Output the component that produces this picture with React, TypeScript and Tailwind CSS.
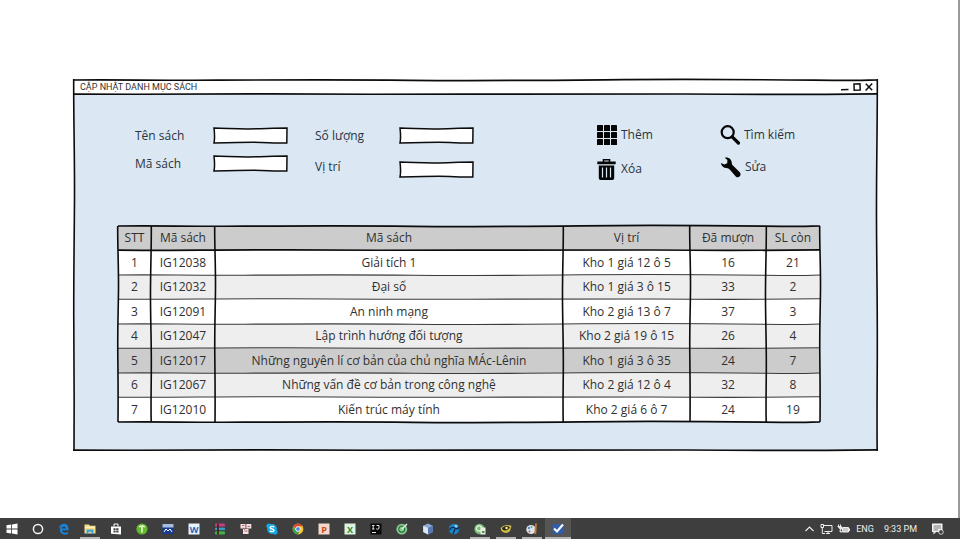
import type { ReactNode } from "react";

type Book = { code: string; title: string; place: string; lent: number; left: number };

const books: Book[] = [
  { code: "IG12038", title: "Giải tích 1", place: "Kho 1 giá 12 ô 5", lent: 16, left: 21 },
  { code: "IG12032", title: "Đại số", place: "Kho 1 giá 3 ô 15", lent: 33, left: 2 },
  { code: "IG12091", title: "An ninh mạng", place: "Kho 2 giá 13 ô 7", lent: 37, left: 3 },
  { code: "IG12047", title: "Lập trình hướng đối tượng", place: "Kho 2 giá 19 ô 15", lent: 26, left: 4 },
  { code: "IG12017", title: "Những nguyên lí cơ bản của chủ nghĩa MÁc-Lênin", place: "Kho 1 giá 3 ô 35", lent: 24, left: 7 },
  { code: "IG12067", title: "Những vấn đề cơ bản trong công nghệ", place: "Kho 2 giá 12 ô 4", lent: 32, left: 8 },
  { code: "IG12010", title: "Kiến trúc máy tính", place: "Kho 2 giá 6 ô 7", lent: 24, left: 19 },
];

const SELECTED = 4;

// Hand-drawn strokes, stretched along the edge that they decorate.
const H_WAVES = [
  "M0 2 C6 1.4 10 2.6 18 2.2 S34 1.6 42 2.3 S58 2.4 66 1.8 S84 1.5 92 2.2 S98 2 100 2",
  "M0 2.2 C8 2.6 14 1.6 24 1.8 S40 2.6 50 2.2 S68 1.5 76 2 S92 2.5 100 1.8",
];
const V_WAVES = [
  "M1.7 0 C1.500 10 2.700 20 2.500 32 S1.500 52 1.800 66 S2.300 88 2 100",
  "M2.300 0 C2.500 12 1.300 24 1.500 38 S2.500 60 2.300 74 S1.800 92 2.200 100",
];

function HStroke({ wave = 0, thin = false }: { wave?: number; thin?: boolean }) {
  return (
    <svg className="block h-1 w-full" viewBox="0 0 100 4" preserveAspectRatio="none" aria-hidden="true">
      <path d={H_WAVES[wave % 2]} fill="none" stroke={thin ? "#3a3a3a" : "#0c0c0c"} strokeWidth={thin ? 1.1 : 1.7} vectorEffect="non-scaling-stroke" />
    </svg>
  );
}

function VStroke({ wave = 0 }: { wave?: number }) {
  return (
    <svg className="block h-full w-1" viewBox="0 0 4 100" preserveAspectRatio="none" aria-hidden="true">
      <path d={V_WAVES[wave % 2]} fill="none" stroke="#0c0c0c" strokeWidth="1.6" vectorEffect="non-scaling-stroke" />
    </svg>
  );
}

function SketchFrame() {
  return (
    <div className="pointer-events-none absolute -inset-0.5">
      <div className="absolute inset-x-px top-0"><HStroke /></div>
      <div className="absolute inset-x-px bottom-0"><HStroke wave={1} /></div>
      <div className="absolute inset-y-px left-0"><VStroke /></div>
      <div className="absolute inset-y-px right-0"><VStroke wave={1} /></div>
    </div>
  );
}

function SketchInput({ id }: { id: string }) {
  return (
    <div className="relative h-[17px] w-[75px]">
      <svg className="absolute inset-0 h-full w-full" viewBox="0 0 75 17" preserveAspectRatio="none" aria-hidden="true">
        <path d="M1 1 C14 1.2 22 2 36 1.900 S60 1 74 1 L73.800 16 C60 16 52 15.300 40 15.300 S16 15.600 1 16 C1.800 12 1.600 6 1 1Z" fill="#fff" stroke="#0c0c0c" strokeWidth="1.5" />
      </svg>
      <input id={id} type="text" className="relative block h-full w-full bg-transparent px-1 text-xs outline-none" />
    </div>
  );
}

function Action({ label, children }: { label: string; children: ReactNode }) {
  return (
    <button type="button" className="flex h-5 items-center gap-1 whitespace-nowrap">
      {children}
      {label}
    </button>
  );
}

function GridIcon() {
  return (
    <svg className="size-5" viewBox="0 0 20 20" fill="#050505" aria-hidden="true">
      {[0, 7, 14].map((y) => [0, 7, 14].map((x) => <rect key={`${x}-${y}`} x={x} y={y} width="6" height="6" rx="0.6" />))}
    </svg>
  );
}

function TrashIcon() {
  return (
    <svg className="h-[21px] w-5" viewBox="0 0 20 21" aria-hidden="true">
      <path d="M6.500 3V0.800h6V3" fill="none" stroke="#050505" strokeWidth="1.600" />
      <path d="M0.300 2.600h18.400v2.700H0.300zM1.800 6.500h15.400v12.700q0 1.800-1.800 1.800H3.600q-1.800 0-1.800-1.800z" fill="#050505" />
      <path d="M5.500 8.500v10M9.500 8.500v10M13.500 8.500v10" stroke="#dbe8f3" strokeWidth="1.200" />
    </svg>
  );
}

function SearchIcon() {
  return (
    <svg className="size-5" viewBox="0 0 20 20" fill="none" stroke="#050505" strokeLinecap="round" aria-hidden="true">
      <circle cx="7.700" cy="7.200" r="6" strokeWidth="2.200" />
      <path d="M12.200 11.800L18.400 18" strokeWidth="3.200" />
    </svg>
  );
}

function WrenchIcon() {
  return (
    <svg className="h-[21px] w-[21px]" viewBox="0 0 20 21" aria-hidden="true">
      <path d="M4.200 0.700C7.600-0.300 11.200 2 11.300 5.900C11.300 7.400 12 8.200 13.200 9.300L19.300 15.200C21.500 18 18.500 21.800 15.500 19.700L9.400 12.800C8.300 11.700 7.500 11.200 6 11.100C3 10.900 0.700 8.700 0.400 5.900L3.900 7.600L6.700 6.200L6.900 3.100Z" fill="#050505" />
    </svg>
  );
}

// Column and row edges of the table, drawn as shares of its size.
const COL_EDGES = [0, 33, 97, 445, 572, 648, 702];
const ROW_EDGES = [0, 24, 49, 73, 98, 122, 147, 171, 196];

function BookTable() {
  return (
    <div className="relative mt-[47px] mr-[57px] ml-11">
      <table className="w-full table-fixed border-collapse text-center text-xs leading-4 text-[#303030]">
        <colgroup>
          <col className="w-[4.7%]" />
          <col className="w-[9.1%]" />
          <col className="w-[49.6%]" />
          <col className="w-[18.1%]" />
          <col className="w-[10.8%]" />
          <col className="w-[7.7%]" />
        </colgroup>
        <thead>
          <tr className="h-6 bg-[#cccccc]">
            {["STT", "Mã sách", "Mã sách", "Vị trí", "Đã mượn", "SL còn"].map((name, i) => (
              <th key={i} scope="col" className="p-0 font-normal">{name}</th>
            ))}
          </tr>
        </thead>
        <tbody>
          {books.map((book, i) => (
            <tr
              key={book.code}
              className={`${i % 2 === 0 ? "h-[25px]" : "h-6"} ${i === SELECTED ? "bg-[#cccccc]" : i % 2 === 1 ? "bg-[#eeeeee]" : "bg-white"}`}
            >
              <td className="p-0">{i + 1}</td>
              <td className="p-0">{book.code}</td>
              <td className="p-0">{book.title}</td>
              <td className="p-0">{book.place}</td>
              <td className="p-0">{book.lent}</td>
              <td className="p-0">{book.left}</td>
            </tr>
          ))}
        </tbody>
      </table>
      <div className="pointer-events-none absolute inset-0">
        {ROW_EDGES.map((edge, i) => (
          <div key={edge} className="absolute inset-x-0 -mt-0.5" style={{ top: `${(edge / 196) * 100}%` }}>
            <HStroke wave={i} thin={i > 1 && i < 8} />
          </div>
        ))}
        {COL_EDGES.map((edge, i) => (
          <div key={edge} className="absolute inset-y-0 -ml-0.5" style={{ left: `${(edge / 702) * 100}%` }}>
            <VStroke wave={i} />
          </div>
        ))}
      </div>
    </div>
  );
}

function Glyph({ children }: { children: ReactNode }) {
  return <svg className="size-3" viewBox="0 0 12 12" aria-hidden="true">{children}</svg>;
}

function Tile({ color, letter, ink = "#fff" }: { color: string; letter: string; ink?: string }) {
  return (
    <Glyph>
      <rect x="0.500" y="0.500" width="11" height="11" fill={color} />
      <text x="6" y="9.500" textAnchor="middle" fontSize="9" fontWeight="700" fill={ink} fontFamily="Open Sans, sans-serif">{letter}</text>
    </Glyph>
  );
}

const apps: { name: string; open?: boolean; active?: boolean; icon: ReactNode }[] = [
  { name: "Start", icon: <Glyph><path d="M0.500 2.200L5.200 1.500V5.600H0.500zM6 1.400L11.500 0.500V5.600H6zM0.500 6.400H5.200V10.500L0.500 9.800zM6 6.400H11.500V11.500L6 10.600z" fill="#fff" /></Glyph> },
  { name: "Cortana", icon: <Glyph><circle cx="6" cy="6" r="4.600" fill="none" stroke="#f4f4f4" strokeWidth="1.500" /></Glyph> },
  { name: "Edge", icon: <Glyph><path d="M10.500 7.300H4C4.200 10 7.500 10.300 10 8.900V11C5.500 12.800 1.800 10.600 1.900 7.200C2 5.300 3 4.200 4.400 3.700C2.500 3.900 1.300 4.800 0.600 6.300C1 2.800 3.200 0.700 6 0.700C9.300 0.700 11 3.200 10.500 7.300zM4.100 5.500H7.800C7.700 2.700 4.200 2.900 4.100 5.500z" fill="#1583dc" /></Glyph> },
  { name: "File Explorer", open: true, icon: <Glyph><path d="M0.500 1.500H5L6 2.700H11.500V10.500H0.500z" fill="#f7dc83" /><path d="M1.500 3.800H10.500V5H1.500z" fill="#fff4c4" /><path d="M2.500 6.500H9.500V11H7.500V8.800H4.500V11H2.500z" fill="#37a4dd" /></Glyph> },
  { name: "Store", icon: <Glyph><path d="M1 3.500H11V11.500L1 10.800z" fill="#fff" /><path d="M4 3.500V1H8V3.500" fill="none" stroke="#fff" /><path d="M3.500 5.200H5.600V7H3.500zM6.200 5.200H8.500V7H6.200zM3.500 7.600H5.600V9.400H3.500zM6.200 7.600H8.500V9.400H6.200z" fill="#444" /></Glyph> },
  { name: "Torrent", icon: <Glyph><circle cx="6" cy="6" r="5.600" fill="#62b92d" /><path d="M3 4Q6 2 9 4M6 4V9.500" fill="none" stroke="#efffdc" strokeWidth="1.500" /></Glyph> },
  { name: "Commander", icon: <Glyph><rect x="0.500" y="1" width="11" height="10" fill="#173a92" /><path d="M0.500 1H11.500V4.500H0.500z" fill="#a8bce0" /><path d="M2 9L4 6L6 8L8 6L10 9" fill="none" stroke="#fff" /></Glyph> },
  { name: "Word", icon: <Tile color="#e9f2fc" letter="W" ink="#2266b8" /> },
  { name: "WinRAR", icon: <Glyph><rect x="1" y="0.500" width="10" height="3.400" rx="1" fill="#c23f85" /><rect x="1" y="4.200" width="10" height="3.400" rx="1" fill="#35a0c8" /><rect x="1" y="8" width="10" height="3.400" rx="1" fill="#45ad4e" /><path d="M4 0.500V11.500" stroke="#4a2618" strokeWidth="1.800" /><path d="M0.500 4H11M0.500 7.800H11" stroke="#3b2020" strokeWidth="0.700" /></Glyph> },
  { name: "Database", icon: <Glyph><rect x="0.500" y="1" width="5" height="4.500" fill="#f5dfe0" /><rect x="6.300" y="1" width="5" height="4.500" fill="#f5dfe0" /><rect x="3" y="6" width="5.500" height="5" fill="#f5dfe0" /><path d="M2 2.500H4.500M7.500 3.500H10M4.500 8H7.500M3 4.500L5 7" stroke="#a94950" strokeWidth="0.800" /></Glyph> },
  { name: "Skype", icon: <Glyph><circle cx="6" cy="6" r="4.900" fill="#13a9e6" /><circle cx="3" cy="3" r="2.600" fill="#13a9e6" /><circle cx="9" cy="9" r="2.600" fill="#13a9e6" /><path d="M8.200 4.200C7 2.800 4 3.200 4.100 4.700C4.300 6.500 8 5.400 8 7.400C7.900 9 4.900 9 3.900 7.700" fill="none" stroke="#fff" strokeWidth="1.400" /></Glyph> },
  { name: "Chrome", icon: <Glyph><circle cx="6" cy="6" r="5.400" fill="#f2c52d" /><path d="M1.300 3.300A5.400 5.400 0 0 1 10.700 3.300H6A2.700 2.700 0 0 0 3.500 5.500z" fill="#dc4437" /><path d="M1.300 3.300A5.400 5.400 0 0 0 5.600 11.400L8 8A2.700 2.700 0 0 1 3.600 7.300z" fill="#38a156" /><circle cx="6" cy="6" r="2.300" fill="#4387ee" stroke="#fff" strokeWidth="0.800" /></Glyph> },
  { name: "PowerPoint", icon: <Tile color="#f5d8ca" letter="P" ink="#cf4a21" /> },
  { name: "Excel", icon: <Tile color="#dff2dc" letter="X" ink="#25873a" /> },
  { name: "IntelliJ IDEA", icon: <Glyph><rect x="0.500" y="0.500" width="11" height="11" fill="#080808" /><path d="M2 2.500H4.500M3.200 2.500V6M2 6H4.500M6.500 2.500H9V5.500Q8 6.800 6.200 5.800M2 9.500H6" fill="none" stroke="#e2e2e2" /></Glyph> },
  { name: "Camtasia", icon: <Glyph><circle cx="5.800" cy="6.200" r="5.400" fill="#8bcf91" /><circle cx="5.800" cy="6.200" r="3" fill="none" stroke="#2f7c42" strokeWidth="1.300" /><path d="M6 6L11 1" stroke="#e5f4e2" strokeWidth="1.500" /></Glyph> },
  { name: "VirtualBox", icon: <Glyph><path d="M6 0.500L10.800 2.800V9L6 11.600L1.200 9V2.800z" fill="#8eabd8" /><path d="M1.200 2.800L6 5V11.600L1.200 9z" fill="#dce7f5" /><path d="M6 5L10.800 2.800V9L6 11.600z" fill="#5877ae" /></Glyph> },
  { name: "Network", icon: <Glyph><circle cx="6" cy="6" r="5.300" fill="#1f82c4" /><path d="M1 7Q4 3 7 5T11 4M5 11L7 6" fill="none" stroke="#102b52" strokeWidth="1.300" /><circle cx="8" cy="3" r="1.600" fill="#7fd0f1" /></Glyph> },
  { name: "Recorder", open: true, icon: <Glyph><circle cx="5.500" cy="6" r="5.200" fill="#74be73" /><circle cx="5" cy="5.500" r="2.600" fill="none" stroke="#edf8e8" strokeWidth="1.200" /><path d="M6.500 4.500H11.500V11.500H6.500z" fill="#e9eee4" /><path d="M8 8H10.500V10H8z" fill="#558b55" /></Glyph> },
  { name: "Viewer", open: true, icon: <Glyph><path d="M0.500 5Q5 0 11.500 3L10 8Q6 12 1.500 8z" fill="#d0bd48" /><path d="M2 5Q6 1.500 10 4.500Q7 8.500 3 7" fill="#252515" /><circle cx="6.500" cy="5" r="1.300" fill="#eee69a" /></Glyph> },
  { name: "Paint", open: true, icon: <Glyph><ellipse cx="5" cy="6.500" rx="4.700" ry="4.500" fill="#d9e5ed" /><circle cx="3" cy="5" r="1.200" fill="#4e8fd1" /><circle cx="5.500" cy="4" r="1" fill="#62b05b" /><circle cx="3.500" cy="8.500" r="1" fill="#bd5b5c" /><path d="M10 0.500L9.300 11" stroke="#c97932" strokeWidth="1.900" /></Glyph> },
  { name: "Mockup editor", open: true, active: true, icon: <Glyph><rect x="0.500" y="1" width="10.500" height="10" rx="1" fill="#315da8" /><path d="M2 5.500L5 8.500L11 1.500" fill="none" stroke="#f5f7ff" strokeWidth="2.200" /></Glyph> },
];

function Taskbar() {
  return (
    <footer className="flex h-[21px] items-stretch bg-[#3e3e3e] font-[Roboto,sans-serif] text-[9px] leading-3 text-[#eeeeee]">
      <nav aria-label="Taskbar" className="-ml-px flex">
        {apps.map((app) => (
          <button
            key={app.name}
            type="button"
            aria-label={app.name}
            className={`relative flex w-[26px] items-center justify-center ${app.active ? "bg-[#555555]" : ""}`}
          >
            {app.icon}
            {app.open && <span className={`absolute bottom-0 h-0.5 bg-[#b5b5b5] ${app.active ? "inset-x-0" : "inset-x-[3px]"}`} />}
          </button>
        ))}
      </nav>
      <div className="ml-auto flex items-center pr-4">
        <svg className="mr-1.5 h-2 w-[9px]" viewBox="0 0 9 8" fill="none" stroke="#eee" aria-hidden="true"><path d="M0.500 6L4.500 2L8.500 6" strokeWidth="1.100" /></svg>
        <svg className="mr-1 h-3 w-[13px]" viewBox="0 0 13 12" fill="none" stroke="#eee" aria-hidden="true"><path d="M3.500 2.500H12V8.500H4.500M6 10.500H10M8 8.500V10.500M1 1.500H3.500V4.500H1zM2.300 4.500V10.500H5" /></svg>
        <svg className="mr-1.5 h-3 w-[13px]" viewBox="0 0 13 12" aria-hidden="true"><path d="M5.500 4.500H11.500V9H5.500z" fill="#ccc" stroke="#eee" /><path d="M12.500 5.500V8M1.500 1.500V4M3.500 1.500V4" stroke="#eee" /><path d="M0.500 3.500H4.500V6L3 7.500V9H5" fill="#eee" stroke="#eee" strokeWidth="0.800" /></svg>
        <span className="mr-2.5">ENG</span>
        <time className="mr-3.5">9:33 PM</time>
        <svg className="h-3 w-[13px]" viewBox="0 0 13 12" aria-hidden="true"><path d="M1 0.500H11.500V9H5L2.500 11.500V9H1z" fill="#f3f3f3" /><path d="M2.500 3H10M2.500 5H10M2.500 7H7" stroke="#555" strokeWidth="0.800" /><circle cx="10" cy="9" r="2.300" fill="#3e3e3e" stroke="#eee" strokeWidth="0.800" /></svg>
      </div>
    </footer>
  );
}

export default function App() {
  return (
    <div className="flex min-h-screen flex-col bg-white font-['Open_Sans','Noto_Sans',sans-serif] text-xs leading-4 text-[#2a3340]">
      <main className="flex-1 border-r-2 border-[#999999] pt-20 pr-[81px] pb-16 pl-[74px]">
        <section aria-label="Cập nhật danh mục sách" className="relative bg-[#dbe8f3] pb-7">
          <header className="relative flex h-[14px] items-center justify-between bg-white pr-1 pl-1.5">
            <h1 className="font-[Roboto,sans-serif] text-[9px] leading-3 text-[#333333]">CẬP NHẬT DANH MỤC SÁCH</h1>
            <div className="flex gap-1">
              <button type="button" aria-label="Minimize">
                <svg className="size-2" viewBox="0 0 8 8"><path d="M0 6.800L7.500 6.500" stroke="#111" strokeWidth="1.500" /></svg>
              </button>
              <button type="button" aria-label="Maximize">
                <svg className="size-2" viewBox="0 0 8 8"><path d="M1 1L7 0.800L7.200 7L1.200 7.200z" fill="none" stroke="#111" strokeWidth="1.500" /></svg>
              </button>
              <button type="button" aria-label="Close">
                <svg className="size-2" viewBox="0 0 8 8"><path d="M0.800 0.800L7.200 7.200M7.200 0.600L0.600 7.400" stroke="#111" strokeWidth="1.500" /></svg>
              </button>
            </div>
            <div className="pointer-events-none absolute inset-x-0 -bottom-0.5"><HStroke wave={1} /></div>
          </header>
          <form className="flex h-[85px] items-start pt-[33px] pl-[61px]" onSubmit={(event) => event.preventDefault()}>
            <div className="flex w-[78px] flex-col gap-2.5 leading-[18px]">
              <label htmlFor="book-name">Tên sách</label>
              <label htmlFor="book-code">Mã sách</label>
            </div>
            <div className="flex w-[102px] flex-col gap-[11px]">
              <SketchInput id="book-name" />
              <SketchInput id="book-code" />
            </div>
            <div className="flex w-[84px] flex-col gap-[13px] leading-[18px]">
              <label htmlFor="book-count">Số lượng</label>
              <label htmlFor="book-place">Vị trí</label>
            </div>
            <div className="flex w-[198px] flex-col gap-[17px]">
              <SketchInput id="book-count" />
              <SketchInput id="book-place" />
            </div>
            <div className="-mt-0.5 flex w-[123px] flex-col items-start gap-3.5">
              <Action label="Thêm"><GridIcon /></Action>
              <Action label="Xóa"><TrashIcon /></Action>
            </div>
            <div className="-mt-0.5 flex flex-col items-start gap-3">
              <Action label="Tìm kiếm"><SearchIcon /></Action>
              <Action label="Sửa"><WrenchIcon /></Action>
            </div>
          </form>
          <BookTable />
          <SketchFrame />
        </section>
      </main>
      <Taskbar />
    </div>
  );
}
